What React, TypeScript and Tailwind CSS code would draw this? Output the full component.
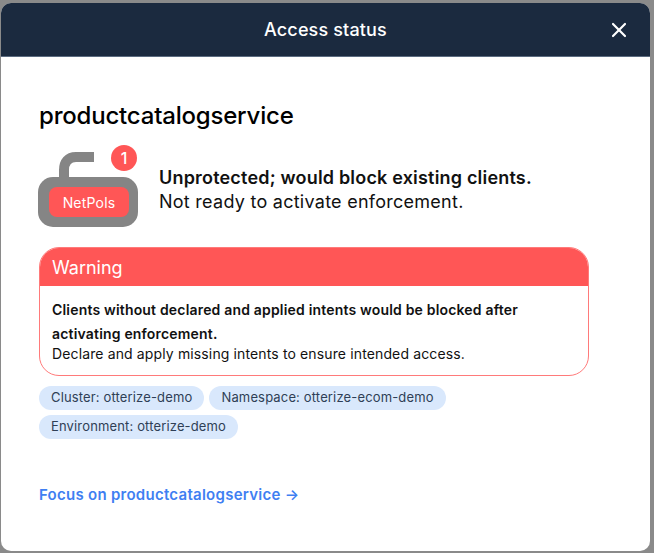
import { X } from "lucide-react";

const chips = [
  "Cluster: otterize-demo",
  "Namespace: otterize-ecom-demo",
  "Environment: otterize-demo",
];

export default function App() {
  return (
    <div className="h-[553px] w-[654px] overflow-hidden bg-[#8a8a8a] pt-[3px] pl-px font-['Inter',sans-serif] text-[#111111]">
      <div className="h-[548px] w-[649px] overflow-hidden rounded-[10px] bg-white">
        <header className="relative flex h-[54px] items-center justify-center border-b border-[#5b6b80] bg-[#1b2a3f] text-[18px] font-medium tracking-[0.15px] text-white">
          <span>Access status</span>
          <X className="absolute top-[15px] right-[19px] h-[24px] w-[24px] text-white" strokeWidth={2.2} />
        </header>
        <main className="flex flex-col pt-[44px] pl-[38px]">
          <h1 className="text-[24px] leading-[30px] font-medium tracking-[-0.2px] text-black">productcatalogservice</h1>
          <section className="mt-[14px] flex items-center">
            <div className="relative h-[86px] w-[120px] shrink-0">
              <svg className="absolute top-[7px] left-[-1px]" width="100" height="78" viewBox="0 0 100 78">
                <path d="M26 28V18C26 10 30 5 38 5H56" fill="none" stroke="#858585" strokeWidth="10" />
                <rect x="0" y="25" width="100" height="50" rx="15" fill="#858585" />
              </svg>
              <div className="absolute top-[42px] left-[10px] flex h-[30px] w-[80px] items-center justify-center rounded-lg bg-[#ff5656] text-[14px] tracking-[0.2px] text-white">NetPols</div>
              <div className="absolute top-0 left-[72px] flex h-[26px] w-[26px] items-center justify-center rounded-full bg-[#ff5656] text-[16px] font-medium text-white">1</div>
            </div>
            <div className="pt-[4px] text-[18px] leading-[24px]">
              <div className="font-semibold tracking-[0.19px]">Unprotected; would block existing clients.</div>
              <div className="tracking-[0.26px]">Not ready to activate enforcement.</div>
            </div>
          </section>
          <section className="mt-[16px] w-[550px] overflow-hidden rounded-[20px] border border-[#ff7a7a]">
            <div className="flex h-[38px] items-center bg-[#ff5656] pl-[12px] text-[18px] text-white">Warning</div>
            <div className="px-[12px] pt-[12px] pb-[11px] text-[14px]">
              <div className="leading-[24px] font-semibold tracking-[0.18px]">Clients without declared and applied intents would be blocked after activating enforcement.</div>
              <div className="mt-[-2px] leading-[20px] tracking-[0.13px]">Declare and apply missing intents to ensure intended access.</div>
            </div>
          </section>
          <section className="mt-[10px] flex w-[550px] flex-wrap gap-x-[5px] gap-y-[5px]">
            {chips.map((c) => (
              <span key={c} className="flex h-[24px] items-center rounded-full bg-[#d9e8fc] px-[12px] text-[13px] tracking-[0.15px] text-[#2f3f56]">{c}</span>
            ))}
          </section>
          <a className="mt-[46px] text-[15px] leading-[20px] font-semibold tracking-[0.27px] text-[#3f7ff2]">Focus on productcatalogservice →</a>
        </main>
      </div>
    </div>
  );
}
